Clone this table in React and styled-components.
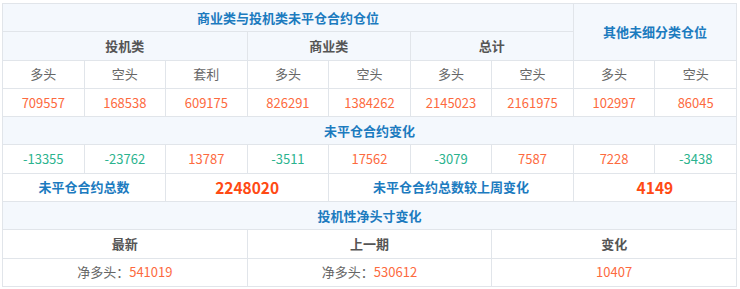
import React from 'react';
import styled, { createGlobalStyle } from 'styled-components';

const GlobalStyle = createGlobalStyle`
	html, body {
		margin: 0;
		padding: 0;
		background: #fff;
	}
	body {
		font-family: 'Noto Sans CJK SC', 'Noto Sans', sans-serif;
	}
`;

const Page = styled.div`
	padding: 3px 2px;
`;

const Table = styled.table`
	width: 735px;
	table-layout: fixed;
	border-collapse: collapse;
	border: 1px solid #e1e5ea;
	font-size: 13px;
`;

const Row = styled.tr`
	height: 28.3px;
	background: ${(props) => (props.head ? '#f4f8fd' : '#fff')};
`;

const Cell = styled.td`
	border: 1px solid #e1e5ea;
	padding: 0;
	text-align: center;
	vertical-align: middle;
	line-height: 16px;
	white-space: nowrap;
	color: ${(props) => props.tone || '#666'};
	font-weight: ${(props) => (props.bold ? 700 : 400)};
	font-size: ${(props) => (props.big ? '15.5px' : '13px')};
`;

const Title = styled(Cell)`
	color: #1c7bbf;
	font-weight: 700;
`;

const Label = styled.span`
	color: #666;
`;

const RED = '#fd6a3e';
const GREEN = '#2bb38e';
const HOT = '#ff4a14';

const sideLabels = ['多头', '空头', '套利', '多头', '空头', '多头', '空头', '多头', '空头'];
const positions = [709557, 168538, 609175, 826291, 1384262, 2145023, 2161975, 102997, 86045];
const changes = [-13355, -23762, 13787, -3511, 17562, -3079, 7587, 7228, -3438];

export default function App() {
	return (
		<>
			<GlobalStyle />
			<Page>
				<Table>
					<colgroup>
						{sideLabels.map((_, i) => (
							<col key={i} />
						))}
					</colgroup>
					<tbody>
						<Row head>
							<Title colSpan={7}>商业类与投机类未平仓合约仓位</Title>
							<Title colSpan={2} rowSpan={2}>
								其他未细分类仓位
							</Title>
						</Row>
						<Row head>
							<Cell colSpan={3} bold tone='#555'>
								投机类
							</Cell>
							<Cell colSpan={2} bold tone='#555'>
								商业类
							</Cell>
							<Cell colSpan={2} bold tone='#555'>
								总计
							</Cell>
						</Row>
						<Row>
							{sideLabels.map((t, i) => (
								<Cell key={i}>{t}</Cell>
							))}
						</Row>
						<Row>
							{positions.map((n, i) => (
								<Cell key={i} tone={RED}>
									{n}
								</Cell>
							))}
						</Row>
						<Row head>
							<Title colSpan={9}>未平仓合约变化</Title>
						</Row>
						<Row>
							{changes.map((n, i) => (
								<Cell key={i} tone={n < 0 ? GREEN : RED}>
									{n}
								</Cell>
							))}
						</Row>
						<Row>
							<Title colSpan={2}>未平仓合约总数</Title>
							<Cell colSpan={2} bold big tone={HOT}>
								2248020
							</Cell>
							<Title colSpan={3}>未平仓合约总数较上周变化</Title>
							<Cell colSpan={2} bold big tone={HOT}>
								4149
							</Cell>
						</Row>
						<Row head>
							<Title colSpan={9}>投机性净头寸变化</Title>
						</Row>
						<Row>
							<Cell colSpan={3} bold tone='#555'>
								最新
							</Cell>
							<Cell colSpan={3} bold tone='#555'>
								上一期
							</Cell>
							<Cell colSpan={3} bold tone='#555'>
								变化
							</Cell>
						</Row>
						<Row>
							<Cell colSpan={3} tone={RED}>
								<Label>净多头：</Label>541019
							</Cell>
							<Cell colSpan={3} tone={RED}>
								<Label>净多头：</Label>530612
							</Cell>
							<Cell colSpan={3} tone={RED}>
								10407
							</Cell>
						</Row>
					</tbody>
				</Table>
			</Page>
		</>
	);
}
